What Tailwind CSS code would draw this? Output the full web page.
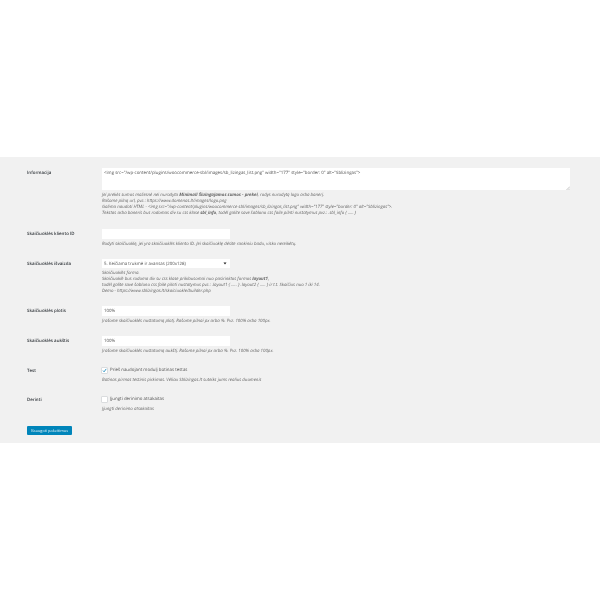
<!DOCTYPE html>
<html lang="lt">
<head>
  <meta charset="UTF-8" />
  <title>Nustatymai</title>
  <script src="https://cdn.jsdelivr.net/npm/@tailwindcss/browser@4"></script>
</head>
<body class="bg-white font-['Open_Sans',sans-serif] text-[4.4px] leading-[6px] text-[#666] [text-rendering:geometricPrecision]">
  <div class="h-[157px]"></div>
  <form class="bg-[#f1f1f1] h-[286px] pt-[5px] pl-[27px] blur-[0.25px]">

    <div class="flex pt-[6px] pb-[7px]">
      <label class="w-[75px] pt-[2px] font-semibold text-[#32373c]">Informacija</label>
      <div class="w-[468px]">
        <div class="h-[22px] bg-white px-[2px] py-[2px] text-[#555] relative">&lt;img src="/wp-content/plugins/woocommerce-sbl/images/sb_lizingas_list.png" width="177" style="border: 0" alt="Sblizingas"&gt;
          <svg class="absolute right-0 bottom-0" width="4" height="4" viewBox="0 0 4 4"><path d="M0.5 4L4 0.5M2.5 4L4 2.5" stroke="#888" stroke-width="0.5"/></svg>
        </div>
        <div class="mt-[2px] italic whitespace-nowrap">
          <p>Jei prekės sumos mažesnė nei nurodyta <b>Minimali Šiuingajamos sumos - prekei</b>, rodys nurodytą logo arba banerį.</p>
          <p>Rašome pilną url, pvz.: https://www.domenas.lt/images/logo.png</p>
          <p>Galima naudoti HTML - &lt;img src="/wp-content/plugins/woocommerce-sbl/images/sb_lizingas_list.png" width="177" style="border: 0" alt="Sblizingas"&gt;.</p>
          <p>Tekstas arba baneris bus rodomas div su css klase <b>sbl_info</b>, todėl galite save šablono css faile pilnti nustatymus pvz.: .sbl_info { ..... }</p>
        </div>
      </div>
    </div>

    <div class="flex py-[6px]">
      <label class="w-[75px] pt-[2px] font-semibold text-[#32373c]">Skaičiuoklės kliento ID</label>
      <div>
        <div class="w-[128px] h-[10px] bg-white"></div>
        <p class="mt-[2px] italic whitespace-nowrap">Rodyti skaičiuoklę, jei yra skaičiuoklės kliento ID. Jei skaičiuoklę dėsite rankiniu būdu, visko nereikėtų.</p>
      </div>
    </div>

    <div class="flex py-[6px]">
      <label class="w-[75px] pt-[2px] font-semibold text-[#32373c]">Skaičiuoklės išvaizda</label>
      <div>
        <div class="w-[128px] h-[9px] bg-white flex items-center justify-between pl-[2px] pr-[3px] text-[#555]">
          <span>5. Keičiama trukmė ir avansas (200x128)</span>
          <svg width="4" height="3" viewBox="0 0 4 3"><path d="M0.5 0.5H3.5L2 2.5Z" fill="#222"/></svg>
        </div>
        <div class="mt-[2px] italic whitespace-nowrap">
          <p>Skaičiuoklės forma.</p>
          <p>Skaičiuoklė bus rodoma div su css klase priklausomai nuo pasirinktos formos <b>layout1</b>,</p>
          <p>todėl galite save šablono css faile pilnti nustatymus pvz.: .layout1 { ..... } .layout2 { ..... } ir t.t. Skaičius nuo 1 iki 14.</p>
          <p>Demo - https://www.sblizingas.lt/skaiciuokle/builder.php</p>
        </div>
      </div>
    </div>

    <div class="flex py-[6px]">
      <label class="w-[75px] pt-[2px] font-semibold text-[#32373c]">Skaičiuoklės plotis</label>
      <div>
        <div class="w-[128px] h-[10px] bg-white px-[2px] flex items-center text-[#555]">100%</div>
        <p class="mt-[2px] italic whitespace-nowrap">Įrašome skaičiuoklės nustatomą plotį. Rašome pilnai px arba %. Pvz. 100% arba 100px.</p>
      </div>
    </div>

    <div class="flex py-[6px]">
      <label class="w-[75px] pt-[2px] font-semibold text-[#32373c]">Skaičiuoklės aukštis</label>
      <div>
        <div class="w-[128px] h-[10px] bg-white px-[2px] flex items-center text-[#555]">100%</div>
        <p class="mt-[2px] italic whitespace-nowrap">Įrašome skaičiuoklės nustatomą aukštį. Rašome pilnai px arba %. Pvz. 100% arba 100px.</p>
      </div>
    </div>

    <div class="flex pt-[6px] pb-[8px]">
      <label class="w-[75px] pt-[2px] font-semibold text-[#32373c]">Test</label>
      <div>
        <div class="flex items-center gap-[3px] h-[8px] text-[#555]">
          <span class="w-[5px] h-[5px] bg-white shadow-[0_0_0_0.5px_#c4c8cc]">
            <svg viewBox="0 0 5 5" class="block w-[5px] h-[5px]"><path d="M1 2.6L2.1 3.8L4.2 0.9" fill="none" stroke="#1e8cbe" stroke-width="0.9"/></svg>
          </span>
          <span>Prieš naudojant modulį būtinas testas</span>
        </div>
        <p class="mt-[3px] italic whitespace-nowrap">Būtinas pirmas testinis pirkimas. Vėliau Sblizingas.lt suteiks jums realius duomenis</p>
      </div>
    </div>

    <div class="flex pt-[4px] pb-[6px]">
      <label class="w-[75px] pt-[2px] font-semibold text-[#32373c]">Derinti</label>
      <div>
        <div class="flex items-center gap-[3px] h-[8px] text-[#555]">
          <span class="w-[5px] h-[5px] bg-white shadow-[0_0_0_0.5px_#c4c8cc]"></span>
          <span>Įjungti derinimo atsakaitas</span>
        </div>
        <p class="mt-[3px] italic whitespace-nowrap">Įjungti derinimo atsakaitas</p>
      </div>
    </div>

    <button type="button" class="mt-[8px] block w-[45px] h-[9px] bg-[#0085ba] rounded-[1px] text-[#e6f3f8] text-[3.9px] leading-[9px] text-center whitespace-nowrap">Išsaugoti pakeitimus</button>
  </form>
</body>
</html>
